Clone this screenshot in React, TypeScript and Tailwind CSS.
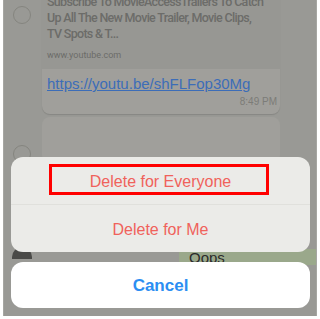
import React from "react";

function Circle() {
  return <div className="w-[18px] h-[18px] rounded-full border border-[#85857f] shrink-0" />;
}

export default function App() {
  return (
    <div className="w-[320px] h-[319px] bg-white" style={{ fontFamily: '"Liberation Sans", Arial, sans-serif' }}>
      <div className="relative ml-[3px] mr-[3px] h-[316px] bg-[#999995] border-l border-r border-[#a6a6a2] overflow-hidden">
        {/* chat in background */}
        <div className="flex gap-[11px] pl-[9px] pt-[6px]">
          <Circle />
          <div className="-mt-[14px] w-[238px] rounded-b-[8px] bg-[#a09f9b] shadow-[0_1px_1px_rgba(0,0,0,0.12)] overflow-hidden">
            <div className="bg-[#979793] px-[5px] pt-[2px] pb-[8px] text-[#6c6c69] font-medium font-[Roboto,sans-serif] tracking-[-0.7px]">
              <div className="text-[12.5px] leading-[16px] whitespace-nowrap">Subscribe To MovieAccessTrailers To Catch</div>
              <div className="text-[12.5px] leading-[16px] whitespace-nowrap">Up All The New Movie Trailer, Movie Clips,</div>
              <div className="text-[12.5px] leading-[16px]">TV Spots &amp; T...</div>
              <div className="text-[9px] leading-[12px] mt-[7px] font-normal tracking-normal">www.youtube.com</div>
            </div>
            <div className="px-[5px] pt-[6px] text-[15px] leading-[18px] text-[#3c6db8] underline">
              https://youtu.be/shFLFop30Mg
            </div>
            <div className="text-right pr-[3px] pt-[3px] pb-[6px] text-[10px] leading-[12px] text-[#7c7c78]">8:49 PM</div>
          </div>
        </div>
        <div className="flex items-end gap-[11px] pl-[9px] mt-[3px]">
          <Circle />
          <div className="w-[238px] h-[46px] rounded-[8px] bg-[#a09f9b] relative">
            <div className="absolute right-[3px] bottom-[-8px] text-[10px] text-[#7c7c78]">8:49 PM</div>
          </div>
        </div>
        {/* partially hidden row */}
        <div className="absolute left-[8px] top-[247px] w-[20px] h-[12px] rounded-t-full bg-[#4a4a48]" />
        <div className="absolute left-[175px] top-[249px] w-[140px] h-[16px] bg-[#9aa88b] pl-[10px] text-[15px] leading-[18px] text-[#2a2a2a]">Oops</div>

        {/* action sheet */}
        <div className="absolute left-[7px] right-[6px] top-[157px] flex flex-col gap-[10px]">
          <div className="h-[95px] rounded-[12px] bg-[#ebebe8] flex flex-col">
            <div className="h-[48px] flex items-center justify-center border-b border-[#e0e0dc] relative">
              <div className="absolute left-[38px] right-[41px] top-[7px] h-[31px] border-[3px] border-[#ff0000]" />
              <span className="text-[16px] text-[#f0625b] mt-[2px]">Delete for Everyone</span>
            </div>
            <div className="flex-1 flex items-center justify-center">
              <span className="text-[16px] text-[#f0625b] mt-[3px]">Delete for Me</span>
            </div>
          </div>
          <div className="h-[46px] rounded-[12px] bg-white flex items-center justify-center">
            <span className="text-[17px] font-bold text-[#2b8ef2] mt-[1px]">Cancel</span>
          </div>
        </div>
      </div>
    </div>
  );
}
